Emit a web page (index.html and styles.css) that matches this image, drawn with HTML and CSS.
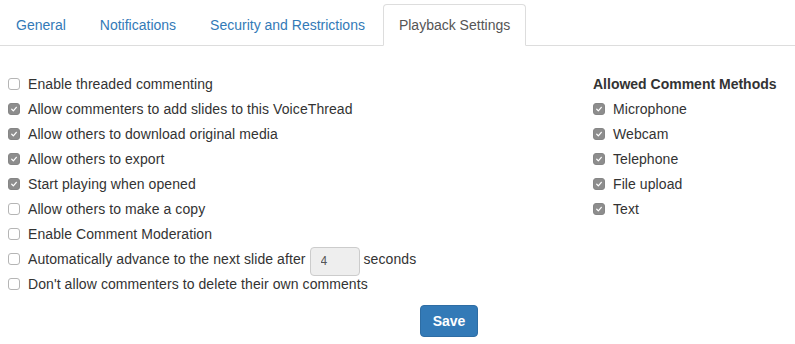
FILE: index.html
```html
<!DOCTYPE html>
<html>
<head>
<meta charset="utf-8">
<link rel="stylesheet" href="styles.css">
</head>
<body>
<ul class="tabs">
  <li class="tab"><a href="#">General</a></li>
  <li class="tab"><a href="#">Notifications</a></li>
  <li class="tab"><a href="#">Security and Restrictions</a></li>
  <li class="tab active"><a href="#">Playback Settings</a></li>
</ul>
<div class="content">
  <div class="left">
    <div class="row"><span class="cb"></span><span>Enable threaded commenting</span></div>
    <div class="row"><span class="cb on"><svg viewBox="0 0 12 12"><path d="M3.3 6.3 L5.2 8.2 L8.8 4" fill="none" stroke="#fff" stroke-width="1.5" stroke-linecap="round" stroke-linejoin="round"/></svg></span><span>Allow commenters to add slides to this VoiceThread</span></div>
    <div class="row"><span class="cb on"><svg viewBox="0 0 12 12"><path d="M3.3 6.3 L5.2 8.2 L8.8 4" fill="none" stroke="#fff" stroke-width="1.5" stroke-linecap="round" stroke-linejoin="round"/></svg></span><span>Allow others to download original media</span></div>
    <div class="row"><span class="cb on"><svg viewBox="0 0 12 12"><path d="M3.3 6.3 L5.2 8.2 L8.8 4" fill="none" stroke="#fff" stroke-width="1.5" stroke-linecap="round" stroke-linejoin="round"/></svg></span><span>Allow others to export</span></div>
    <div class="row"><span class="cb on"><svg viewBox="0 0 12 12"><path d="M3.3 6.3 L5.2 8.2 L8.8 4" fill="none" stroke="#fff" stroke-width="1.5" stroke-linecap="round" stroke-linejoin="round"/></svg></span><span>Start playing when opened</span></div>
    <div class="row"><span class="cb"></span><span>Allow others to make a copy</span></div>
    <div class="row"><span class="cb"></span><span>Enable Comment Moderation</span></div>
    <div class="row"><span class="cb"></span><span>Automatically advance to the next slide after</span><input class="num" type="text" value="4"><span>seconds</span></div>
    <div class="row"><span class="cb"></span><span>Don't allow commenters to delete their own comments</span></div>
    <div class="actions"><button class="btn">Save</button></div>
  </div>
  <div class="right">
    <div class="heading">Allowed Comment Methods</div>
    <div class="row"><span class="cb on"><svg viewBox="0 0 12 12"><path d="M3.3 6.3 L5.2 8.2 L8.8 4" fill="none" stroke="#fff" stroke-width="1.5" stroke-linecap="round" stroke-linejoin="round"/></svg></span><span>Microphone</span></div>
    <div class="row"><span class="cb on"><svg viewBox="0 0 12 12"><path d="M3.3 6.3 L5.2 8.2 L8.8 4" fill="none" stroke="#fff" stroke-width="1.5" stroke-linecap="round" stroke-linejoin="round"/></svg></span><span>Webcam</span></div>
    <div class="row"><span class="cb on"><svg viewBox="0 0 12 12"><path d="M3.3 6.3 L5.2 8.2 L8.8 4" fill="none" stroke="#fff" stroke-width="1.5" stroke-linecap="round" stroke-linejoin="round"/></svg></span><span>Telephone</span></div>
    <div class="row"><span class="cb on"><svg viewBox="0 0 12 12"><path d="M3.3 6.3 L5.2 8.2 L8.8 4" fill="none" stroke="#fff" stroke-width="1.5" stroke-linecap="round" stroke-linejoin="round"/></svg></span><span>File upload</span></div>
    <div class="row"><span class="cb on"><svg viewBox="0 0 12 12"><path d="M3.3 6.3 L5.2 8.2 L8.8 4" fill="none" stroke="#fff" stroke-width="1.5" stroke-linecap="round" stroke-linejoin="round"/></svg></span><span>Text</span></div>
  </div>
</div>
</body>
</html>
```

FILE: styles.css
```css
* { box-sizing: border-box; }
html, body { margin: 0; padding: 0; background: #fff; }
body {
  font-family: "Liberation Sans", Arial, sans-serif;
  font-size: 14px;
  line-height: 20px;
  color: #333;
}
.tabs {
  list-style: none;
  margin: 4px 0 0 0;
  padding: 0;
  display: flex;
  border-bottom: 1px solid #ddd;
}
.tab {
  margin-right: 2px;
  margin-bottom: -1px;
}
.tab a {
  display: block;
  padding: 10px 15px;
  line-height: 20px;
  border: 1px solid transparent;
  border-radius: 4px 4px 0 0;
  color: #337ab7;
  text-decoration: none;
}
.tab.active a {
  color: #555;
  background: #fff;
  border-color: #ddd;
  border-bottom-color: #fff;
}
.content {
  display: flex;
  padding: 28px 0 0 8px;
  letter-spacing: 0.08px;
}
.left { width: 585px; }
.right { flex: 1; }
.row {
  display: flex;
  align-items: center;
  height: 25px;
  padding-bottom: 5px;
  white-space: pre;
}
.heading {
  font-weight: bold;
  letter-spacing: 0;
  height: 25px;
  padding-bottom: 5px;
}
.cb {
  width: 12px;
  height: 12px;
  flex: none;
  margin-right: 8px;
  border: 1px solid #b5b5b5;
  border-radius: 3px;
  background: #fff;
  display: flex;
}
.cb.on {
  background: #8d8d8d;
  border-color: #868686;
}
.cb svg { width: 10px; height: 10px; }
.num {
  width: 50px;
  height: 29px;
  margin: 4px 4px 0 4px;
  padding: 0 10px;
  font-family: "Liberation Sans", Arial, sans-serif;
  font-size: 12px;
  color: #555;
  background: #eee;
  border: 1px solid #ccc;
  border-radius: 4px;
}
.actions {
  padding: 6px 0 0 412px;
}
.btn {
  width: 58px;
  height: 32px;
  padding: 0;
  font-family: "Liberation Sans", Arial, sans-serif;
  font-size: 14px;
  font-weight: bold;
  color: #fff;
  background: #337ab7;
  border: 1px solid #2e6da4;
  border-radius: 4px;
}
```
